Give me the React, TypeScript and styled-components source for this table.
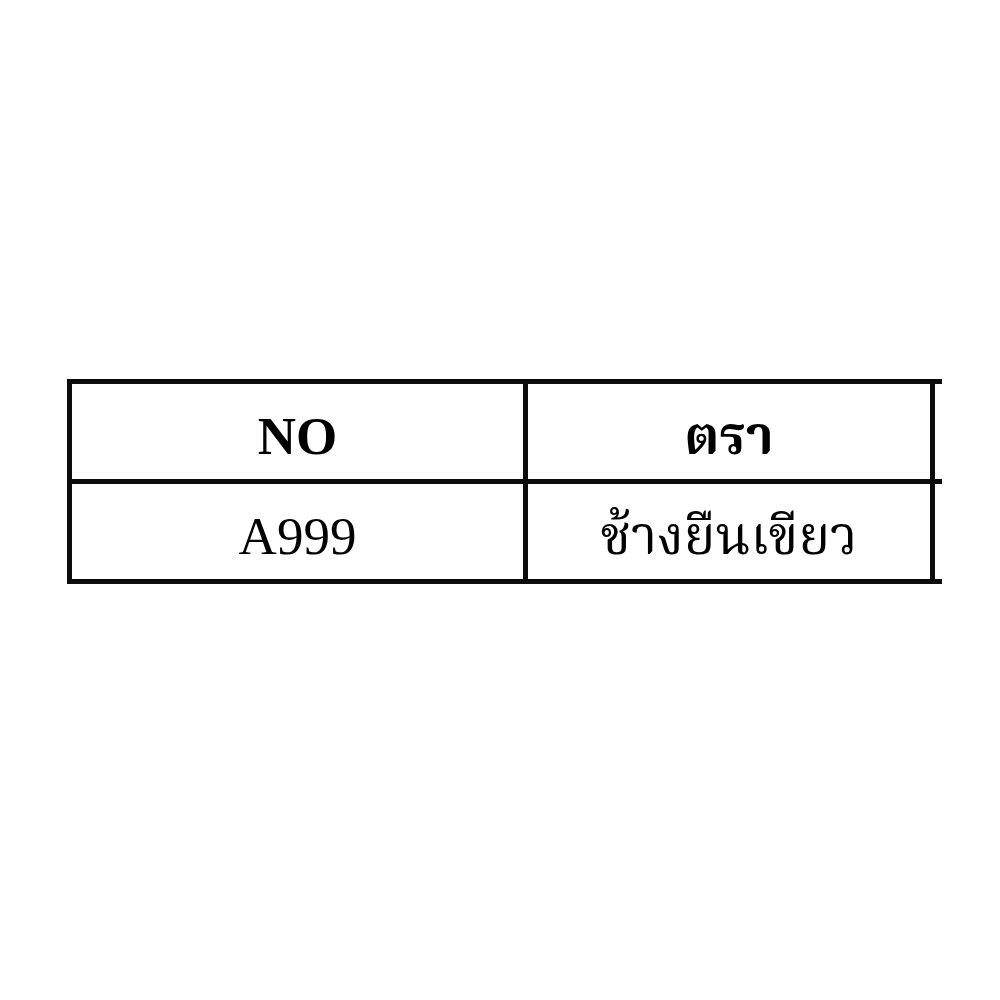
import React from 'react';
import styled, { createGlobalStyle } from 'styled-components';

const GlobalStyle = createGlobalStyle`
  html, body {
    margin: 0;
    padding: 0;
    background: #fff;
  }
  body {
    font-family: 'Liberation Serif', 'Noto Serif Thai', 'Noto Sans Thai', 'Loma', 'Garuda', serif;
    color: #000;
  }
`;

const Page = styled.div`
  width: 1000px;
  height: 1000px;
  padding: 379px 0 0 67px;
  box-sizing: border-box;
`;

const Clip = styled.div`
  width: 875px;
  overflow: hidden;
`;

const Table = styled.table`
  border-collapse: collapse;
  table-layout: fixed;
  width: 1300px;
`;

const Cell = styled.td<{ $head?: boolean; $width?: number }>`
  border: 5px solid #0c0c0c;
  height: 100px;
  padding: 10px 0 0;
  box-sizing: border-box;
  text-align: center;
  vertical-align: middle;
  font-size: 53px;
  font-weight: ${(p) => (p.$head ? 700 : 400)};
  width: ${(p) => (p.$width ? `${p.$width}px` : 'auto')};
  line-height: 1;
`;

const rows = [['A999', 'ช้างยืนเขียว', '']];

function App() {
  return (
    <>
      <GlobalStyle />
      <Page>
        <Clip>
          <Table>
            <thead>
              <tr>
                <Cell as="th" $head $width={456}>NO</Cell>
                <Cell as="th" $head $width={407}>ตรา</Cell>
                <Cell as="th" $head></Cell>
              </tr>
            </thead>
            <tbody>
              {rows.map((r) => (
                <tr key={r[0]}>
                  {r.map((c, i) => (
                    <Cell key={i}>{c}</Cell>
                  ))}
                </tr>
              ))}
            </tbody>
          </Table>
        </Clip>
      </Page>
    </>
  );
}

export default App;
